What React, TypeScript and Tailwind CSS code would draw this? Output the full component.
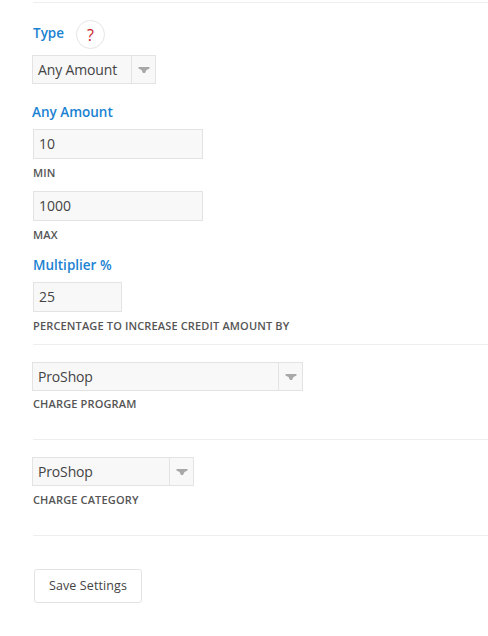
const font = { fontFamily: '"Open Sans", sans-serif' };

function Heading({ children, className = "" }: { children: React.ReactNode; className?: string }) {
  return <div className={"text-[13.5px] leading-[20px] font-semibold text-[#1a82d2] " + className}>{children}</div>;
}

function Caption({ children, className = "" }: { children: React.ReactNode; className?: string }) {
  return <div className={"text-[11px] leading-[14px] font-semibold uppercase tracking-[0.15px] text-[#555] " + className}>{children}</div>;
}

function TextBox({ value, width, className = "" }: { value: string; width: string; className?: string }) {
  return (
    <div className={"ml-px h-[30px] border border-[#e3e3e3] bg-[#f8f8f8] px-[5px] text-[14px] leading-[28px] text-[#444] " + width + " " + className}>
      {value}
    </div>
  );
}

function Select({ value, width, className = "" }: { value: string; width: string; className?: string }) {
  return (
    <div className={"flex h-[29px] border border-[#e3e3e3] bg-[#f8f8f8] text-[14px] leading-[27px] text-[#444] " + width + " " + className}>
      <div className="flex-1 px-[5px] tracking-[-0.15px]">{value}</div>
      <div className="flex w-[24px] items-center justify-center border-l border-[#e3e3e3]">
        <svg width="12" height="6" viewBox="0 0 12 6">
          <path d="M0.5 0H11.5V1.5L8.5 3L7 6H5L3.5 3L0.5 1.5Z" fill="#a8a8a8" />
        </svg>
      </div>
    </div>
  );
}

function Rule({ className = "" }: { className?: string }) {
  return <div className={"ml-px h-px bg-[#eeeeee] " + className} />;
}

export default function App() {
  return (
    <div style={font} className="h-[636px] w-[488px] overflow-hidden bg-white pl-[32px] pt-[2px]">
      <Rule />
      <div className="mt-[17px] flex h-[29px] items-start">
        <Heading className="ml-px mt-[3px]">Type</Heading>
        <div className="ml-[12px] flex h-[29px] w-[29px] items-center justify-center rounded-full border border-[#e5e5e5] text-[16px] text-[#c8202a]">
          ?
        </div>
      </div>
      <Select value="Any Amount" width="w-[124px]" className="mt-[6px]" />
      <Heading className="mt-[18px]">Any Amount</Heading>
      <TextBox value="10" width="w-[170px]" className="mt-[7px]" />
      <Caption className="ml-px mt-[7px]">Min</Caption>
      <TextBox value="1000" width="w-[170px]" className="mt-[11px]" />
      <Caption className="ml-px mt-[7px]">Max</Caption>
      <Heading className="ml-px mt-[13px]">Multiplier %</Heading>
      <TextBox value="25" width="w-[89px]" className="mt-[7px]" />
      <Caption className="ml-px mt-[7px]">Percentage to increase credit amount by</Caption>
      <Rule className="mt-[11px]" />
      <Select value="ProShop" width="w-[271px]" className="mt-[17px]" />
      <Caption className="ml-px mt-[6px]">Charge Program</Caption>
      <Rule className="mt-[28px]" />
      <Select value="ProShop" width="w-[162px]" className="mt-[17px]" />
      <Caption className="ml-px mt-[7px]">Charge Category</Caption>
      <Rule className="mt-[28px]" />
      <button className="ml-[2px] mt-[33px] h-[34px] w-[108px] rounded-[3px] border border-[#e3e3e3] bg-white text-[12.5px] font-medium tracking-[0.1px] text-[#444]">
        Save Settings
      </button>
    </div>
  );
}
